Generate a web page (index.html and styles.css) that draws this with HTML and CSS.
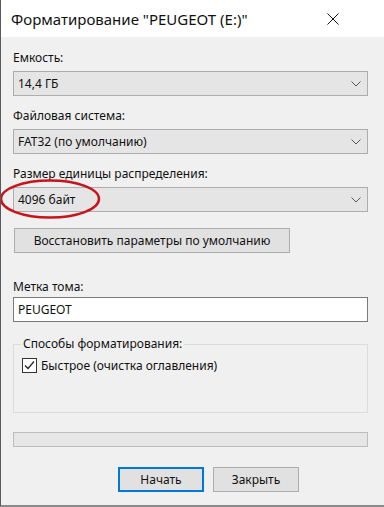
FILE: index.html
```html
<!DOCTYPE html>
<html lang="ru">
<head>
    <meta charset="UTF-8">
    <title>Форматирование</title>
    <link rel="stylesheet" href="styles.css">
</head>
<body>
    <div class="window">
        <div class="titlebar">
            <span class="title">Форматирование "PEUGEOT (E:)"</span>
            <svg class="close" width="12" height="12" viewBox="0 0 12 12">
                <path d="M0.5 0.5 L11.5 11.5 M11.5 0.5 L0.5 11.5" stroke="#111" stroke-width="1" fill="none"/>
            </svg>
        </div>

        <div class="content">
            <div class="label first">Емкость:</div>
            <div class="select">
                <span>14,4 ГБ</span>
                <svg class="chevron" width="10" height="6" viewBox="0 0 10 6"><path d="M0.5 0.5 L5 5 L9.5 0.5" stroke="#555" fill="none"/></svg>
            </div>

            <div class="label">Файловая система:</div>
            <div class="select">
                <span>FAT32 (по умолчанию)</span>
                <svg class="chevron" width="10" height="6" viewBox="0 0 10 6"><path d="M0.5 0.5 L5 5 L9.5 0.5" stroke="#555" fill="none"/></svg>
            </div>

            <div class="label">Размер единицы распределения:</div>
            <div class="select">
                <span>4096 байт</span>
                <svg class="chevron" width="10" height="6" viewBox="0 0 10 6"><path d="M0.5 0.5 L5 5 L9.5 0.5" stroke="#555" fill="none"/></svg>
            </div>

            <div class="btn restore">Восстановить параметры по умолчанию</div>

            <div class="label volume">Метка тома:</div>
            <div class="input">PEUGEOT</div>

            <fieldset class="group">
                <legend>Способы форматирования:</legend>
                <div class="check-row">
                    <span class="checkbox">
                        <svg width="13" height="13" viewBox="0 0 13 13"><path d="M2 6.5 L5 9.5 L11 2.5" stroke="#222" stroke-width="1.2" fill="none"/></svg>
                    </span>
                    <span>Быстрое (очистка оглавления)</span>
                </div>
            </fieldset>

            <div class="progress"></div>

            <div class="actions">
                <div class="btn default">Начать</div>
                <div class="btn">Закрыть</div>
            </div>
        </div>

        <!-- red mark drawn over the cluster size box -->
        <svg class="mark" width="104" height="44" viewBox="0 0 104 44">
            <ellipse cx="51" cy="21" rx="49" ry="18.5" stroke="#c8141c" stroke-width="2.5" fill="none"/>
        </svg>
    </div>
</body>
</html>
```

FILE: styles.css
```css
body {
    margin: 0;
    background: #f0f0f0;
    font-family: "Noto Sans", "Open Sans", sans-serif;
    font-size: 12px;
    color: #111;
}

.window {
    position: relative;
    width: 384px;
    height: 507px;
    box-sizing: border-box;
    border-left: 1px solid #5a5a5a;
    border-bottom: 2px solid #8a8a8a;
    overflow: hidden;
}

.titlebar {
    height: 37px;
    background: #fff;
    display: flex;
    align-items: center;
    justify-content: space-between;
    padding: 0 45px 0 10px;
}

.title {
    font-size: 15px;
}

.content {
    padding: 0 16px 0 12px;
    display: flex;
    flex-direction: column;
}

.label {
    line-height: 16px;
    margin-top: 12px;
    margin-bottom: 5px;
}

.label.first {
    margin-top: 13px;
}

.label.volume {
    margin-top: 26px;
    margin-bottom: 2px;
}

.select {
    height: 25px;
    box-sizing: border-box;
    background: #e5e5e5;
    border: 1px solid #adadad;
    display: flex;
    align-items: center;
    justify-content: space-between;
    padding: 0 6px 0 4px;
}

.chevron {
    margin-top: 1px;
}

.btn {
    height: 25px;
    box-sizing: border-box;
    background: #e1e1e1;
    border: 1px solid #adadad;
    display: flex;
    align-items: center;
    justify-content: center;
}

.restore {
    margin-top: 16px;
    width: 276px;
    margin-left: 1px;
}

.input {
    height: 25px;
    box-sizing: border-box;
    background: #fff;
    border: 1px solid #7a7a7a;
    display: flex;
    align-items: center;
    padding: 0 4px;
}

.group {
    margin: 14px 0 0;
    padding: 4px 8px 0;
    height: 77px;
    box-sizing: border-box;
    border: 1px solid #dcdcdc;
}

.group legend {
    padding: 0 2px;
    margin-left: -1px;
    line-height: 16px;
}

.check-row {
    display: flex;
    align-items: center;
    gap: 4px;
    margin-top: 1px;
}

.checkbox {
    width: 15px;
    height: 15px;
    box-sizing: border-box;
    border: 1px solid #333;
    background: #fff;
    display: flex;
    align-items: center;
    justify-content: center;
}

.progress {
    margin-top: 19px;
    height: 15px;
    box-sizing: border-box;
    background: #e6e6e6;
    border: 1px solid #bcbcbc;
}

.actions {
    margin-top: 20px;
    display: flex;
    gap: 9px;
    padding-left: 105px;
}

.actions .btn {
    width: 86px;
}

.btn.default {
    border: 2px solid #0078d7;
}

.mark {
    position: absolute;
    left: -2px;
    top: 178px;
}
```
